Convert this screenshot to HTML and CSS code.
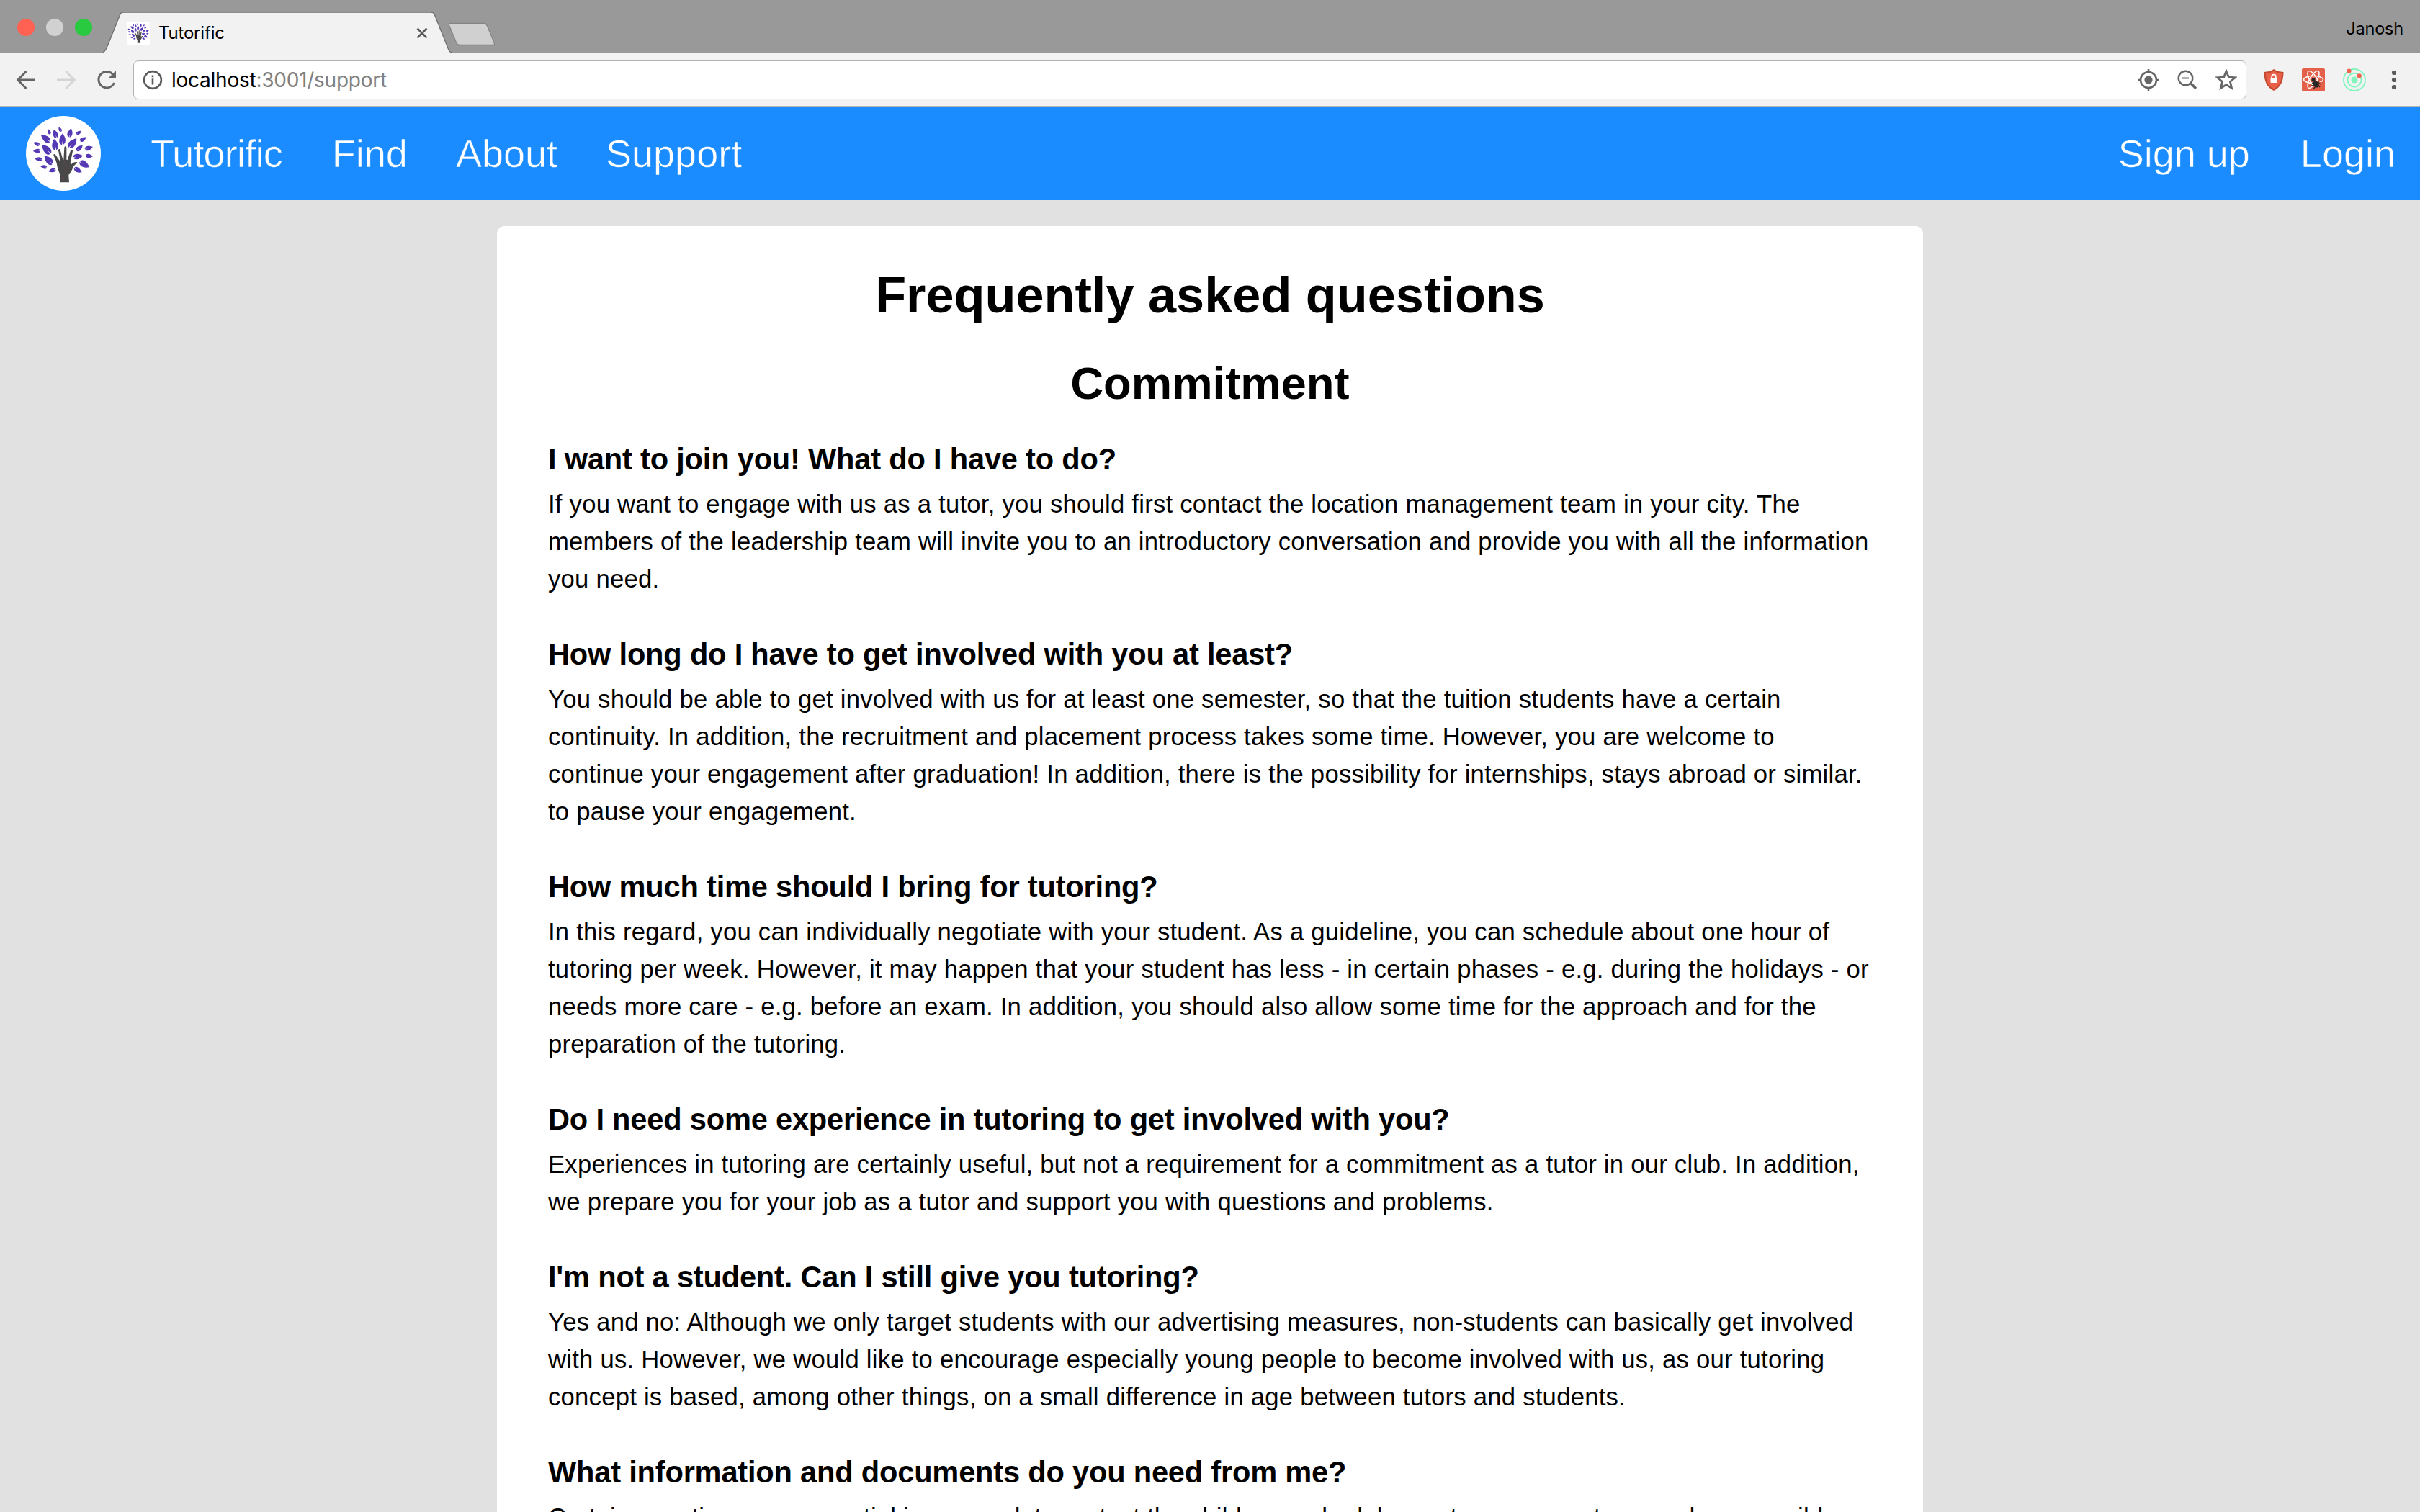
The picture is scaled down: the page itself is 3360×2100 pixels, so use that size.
FILE: index.html
```html
<!DOCTYPE html>
<html lang="en">
<head>
<meta charset="utf-8">
<title>Tutorific</title>
<link rel="stylesheet" href="styles.css">
</head>
<body>
<svg class="defs" width="0" height="0" aria-hidden="true">
  <defs>
    <path id="leaf" d="M0-50C22-28 35 8 22 33C17 43 9 47 3 50L1 14L-4 50C-17 46-29 38-28 12C-27-12-12-30 0-50Z"/>
    <g id="tree">
      <g fill="#5538b4">
        <use href="#leaf" transform="translate(145 110) rotate(-20) scale(.22)"/>
        <use href="#leaf" transform="translate(190 100) rotate(-30) scale(.22)"/>
        <use href="#leaf" transform="translate(170 118) rotate(-20) scale(.36)"/>
        <use href="#leaf" transform="translate(232 114) rotate(12) scale(.38)"/>
        <use href="#leaf" transform="translate(268 114) rotate(55) scale(.26)"/>
        <use href="#leaf" transform="translate(130 138) rotate(-55) scale(.46)"/>
        <use href="#leaf" transform="translate(200 141) scale(.47)"/>
        <use href="#leaf" transform="translate(286 141) rotate(55) scale(.3)"/>
        <use href="#leaf" transform="translate(92 160) rotate(-70) scale(.28)"/>
        <use href="#leaf" transform="translate(169 163) rotate(-10) scale(.47)"/>
        <use href="#leaf" transform="translate(243 157) rotate(38) scale(.5)"/>
        <use href="#leaf" transform="translate(133 183) rotate(-45) scale(.52)"/>
        <use href="#leaf" transform="translate(271 178) rotate(48) scale(.34)"/>
        <use href="#leaf" transform="translate(310 178) rotate(72) scale(.35)"/>
        <use href="#leaf" transform="translate(93 190) rotate(-95) scale(.31)"/>
        <use href="#leaf" transform="translate(312 211) rotate(95) scale(.3)"/>
        <use href="#leaf" transform="translate(265 213) rotate(80) scale(.4)"/>
        <use href="#leaf" transform="translate(100 224) rotate(-85) scale(.31)"/>
        <use href="#leaf" transform="translate(142 228) rotate(-45) scale(.48)"/>
        <use href="#leaf" transform="translate(292 246) rotate(118) scale(.47)"/>
        <use href="#leaf" transform="translate(122 256) rotate(-82) scale(.28)"/>
        <use href="#leaf" transform="translate(157 271) rotate(-108) scale(.31)"/>
        <use href="#leaf" transform="translate(265 270) rotate(118) scale(.36)"/>
      </g>
      <path fill="#484848" d="M191 321L192 290C186 280 179 262 177 246C175 232 166 216 163 207C163 202 169 202 172 207L188 230L191 228L183 188C182 181 189 180 191 186L202 226L205 226L208 176C209 169 216 169 217 176L217 226L221 227L234 189C236 183 243 184 243 190L233 240L236 247C242 239 250 235 259 236C263 237 262 240 259 242C247 248 242 266 237 275C233 282 226 285 226 292L228 321Z"/>
      <g fill="#b5402f">
        <circle cx="190" cy="240" r="1.6"/><circle cx="208" cy="238" r="1.6"/><circle cx="200" cy="252" r="1.6"/><circle cx="219" cy="254" r="1.6"/><circle cx="190" cy="268" r="1.6"/><circle cx="211" cy="270" r="1.6"/><circle cx="228" cy="262" r="1.6"/><circle cx="202" cy="284" r="1.6"/><circle cx="219" cy="286" r="1.6"/><circle cx="205" cy="303" r="1.6"/><circle cx="219" cy="308" r="1.6"/>
      </g>
    </g>
  </defs>
</svg>

<div class="titlebar">
  <div class="lights"><i class="light close"></i><i class="light minimise"></i><i class="light expand"></i></div>
  <div class="tab">
    <svg class="tab-shape" width="486" height="58" viewBox="0 0 486 58"><path d="M0 58L1 56.5C5 54 5 50 7 46L23 6C25 1.500 25 1 29 1H454C459 1 459 2 461 6L479 51C481 56 481 56 485 57L486 58Z" fill="#f2f2f2"/><path d="M0 57C4 55 5 50 7 46L23 6C25 1.500 25 1 29 1H454C459 1 459 2 461 6L479 51C481 56 481 56 485 57" fill="none" stroke="#6d6d6d" stroke-width="1.300"/></svg>
    <svg class="favicon" width="32" height="32" viewBox="66 69 272 272"><path fill="#fff" d="M66 69h272v272H66z"/><use href="#tree"/></svg>
    <span class="tab-title">Tutorific</span>
    <svg class="tab-close" width="16" height="16" viewBox="0 0 16 16"><path d="M1.500 1.500L14.500 14.500M14.500 1.500L1.500 14.500" stroke="#5a5a5a" stroke-width="2.600"/></svg>
  </div>
  <svg class="new-tab" width="66" height="34" viewBox="0 0 66 34"><path d="M3 1.500H50Q53 1.500 54.500 5L64 28Q65.500 31.500 62 31.500H16Q13 31.500 11.500 28L1.500 4Q.8 1.500 3 1.500Z" fill="#d0d0d0" stroke="#858585" stroke-width="1.300"/></svg>
  <span class="profile">Janosh</span>
</div>

<div class="toolbar">
  <div class="buttons">
    <svg width="28" height="28" viewBox="0 0 28 28" fill="none" stroke="#666" stroke-width="3"><path d="M27 14H4M14.500 2L2.800 14L14.500 26"/></svg>
    <svg width="28" height="28" viewBox="0 0 28 28" fill="none" stroke="#d4d4d4" stroke-width="3"><path d="M1 14H24M13.500 2L25.200 14L13.500 26"/></svg>
    <svg width="28" height="28" viewBox="0 0 28 28"><path d="M22.500 6.200A11.200 11.200 0 1 0 24.500 18" fill="none" stroke="#666" stroke-width="3"/><path d="M27 1V12H16Z" fill="#666"/></svg>
  </div>
  <div class="address">
    <svg width="28" height="28" viewBox="0 0 28 28"><circle cx="14" cy="14" r="11.900" fill="none" stroke="#5a5a5a" stroke-width="2.600"/><path d="M12.700 7.500h2.600v2.700h-2.600zM12.700 12.300h2.600v8.200h-2.600z" fill="#5a5a5a"/></svg>
    <span class="url"><b>localhost</b>:3001/support</span>
    <div class="page-actions">
      <svg width="30" height="30" viewBox="0 0 30 30" fill="none" stroke="#666" stroke-width="2.600"><circle cx="15" cy="15" r="11"/><circle cx="15" cy="15" r="5.600" fill="#666" stroke="none"/><path d="M15 0V5M15 25V30M0 15H5M25 15H30"/></svg>
      <svg width="28" height="28" viewBox="0 0 28 28" fill="none" stroke="#666"><circle cx="11.500" cy="11.500" r="9.800" stroke-width="2.400"/><path d="M7 11.500h9" stroke-width="2"/><path d="M18 18L26 26" stroke-width="3.600"/></svg>
      <svg width="30" height="30" viewBox="1.500 1.500 27 27"><path d="M15 4L18 11.500L26 12.100L19.900 17.300L21.800 25.200L15 20.900L8.200 25.200L10.100 17.300L4 12.100L12 11.500Z" fill="none" stroke="#666" stroke-width="2.500"/></svg>
    </div>
  </div>
  <div class="extensions">
    <svg width="28" height="32" viewBox="0 0 28 32"><path d="M14 1C18 4 22 4.500 27.500 5C27.500 17 24 26 14 31C4 26 .5 17 .5 5C6 4.500 10 4 14 1Z" fill="#c4492f"/><path d="M14 3.500C17.500 6 21 6.700 25 7C25 17 22 24.500 14 28.500C6 24.500 3 17 3 7C7 6.700 10.500 6 14 3.500Z" fill="#e8604a"/><path d="M11.200 14V11.500a2.800 2.800 0 0 1 5.600 0V14" fill="none" stroke="#fff" stroke-width="1.800"/><rect x="9.500" y="13" width="9" height="7" rx="1" fill="#fff"/></svg>
    <svg width="32" height="32" viewBox="0 0 32 32"><rect width="32" height="32" rx="2" fill="#e4604a"/><g fill="none" stroke="#fff" stroke-width="1.500"><ellipse cx="16" cy="15.500" rx="13.500" ry="5"/><ellipse cx="16" cy="15.500" rx="13.500" ry="5" transform="rotate(60 16 15.500)"/><ellipse cx="16" cy="15.500" rx="13.500" ry="5" transform="rotate(120 16 15.500)"/></g><path d="M14.500 28L15.500 22L20 17L29 20L27 28L19 30.500Z" fill="#e4604a"/><g fill="#262626" stroke="#262626"><circle cx="16" cy="16" r="2.600" stroke="none"/><ellipse cx="19.700" cy="22" rx="3.600" ry="4.800" transform="rotate(-35 19.700 22)" stroke="none"/><path d="M14 20L18 22M13.500 24L18 24M16 28.500L19 25M23 17V20L27 22.500M22 22L25 26" fill="none" stroke-width="1.300"/></g></svg>
    <svg width="32" height="32" viewBox="0 0 32 32"><g fill="none" stroke="#84f5bd" stroke-width="1.900"><circle cx="16" cy="16" r="15"/><circle cx="16" cy="16" r="9.500"/></g><circle cx="16" cy="16" r="4.500" fill="#84f5bd"/><circle cx="8.500" cy="3.500" r="3.100" fill="#f26350"/><circle cx="22.700" cy="10.300" r="3.100" fill="#f26350"/></svg>
  </div>
  <svg class="menu" width="8" height="28" viewBox="0 0 8 28" fill="#5a5a5a"><circle cx="4" cy="4" r="3.100"/><circle cx="4" cy="14" r="3.100"/><circle cx="4" cy="24" r="3.100"/></svg>
</div>

<header class="site-nav">
  <svg class="logo" width="104" height="104" viewBox="48 44 312 312"><circle cx="204" cy="200" r="156" fill="#fff"/><use href="#tree"/></svg>
  <nav class="links"><a class="brand">Tutorific</a><a>Find</a><a>About</a><a>Support</a></nav>
  <nav class="links account"><a>Sign up</a><a>Login</a></nav>
</header>

<main class="page">
  <article class="card">
    <h1>Frequently asked questions</h1>
    <h2>Commitment</h2>
    <section>
      <h3>I want to join you! What do I have to do?</h3>
      <p>If you want to engage with us as a tutor, you should first contact the location management team in your city. The<br>members of the leadership team will invite you to an introductory conversation and provide you with all the information<br>you need.</p>
    </section>
    <section>
      <h3>How long do I have to get involved with you at least?</h3>
      <p>You should be able to get involved with us for at least one semester, so that the tuition students have a certain<br>continuity. In addition, the recruitment and placement process takes some time. However, you are welcome to<br>continue your engagement after graduation! In addition, there is the possibility for internships, stays abroad or similar.<br>to pause your engagement.</p>
    </section>
    <section>
      <h3>How much time should I bring for tutoring?</h3>
      <p>In this regard, you can individually negotiate with your student. As a guideline, you can schedule about one hour of<br>tutoring per week. However, it may happen that your student has less - in certain phases - e.g. during the holidays - or<br>needs more care - e.g. before an exam. In addition, you should also allow some time for the approach and for the<br>preparation of the tutoring.</p>
    </section>
    <section>
      <h3>Do I need some experience in tutoring to get involved with you?</h3>
      <p>Experiences in tutoring are certainly useful, but not a requirement for a commitment as a tutor in our club. In addition,<br>we prepare you for your job as a tutor and support you with questions and problems.</p>
    </section>
    <section>
      <h3>I'm not a student. Can I still give you tutoring?</h3>
      <p>Yes and no: Although we only target students with our advertising measures, non-students can basically get involved<br>with us. However, we would like to encourage especially young people to become involved with us, as our tutoring<br>concept is based, among other things, on a small difference in age between tutors and students.</p>
    </section>
    <section>
      <h3>What information and documents do you need from me?</h3>
      <p>Certain questions are essential in our work to protect the children and adolescents we support as much as possible</p>
    </section>
  </article>
</main>
</body>
</html>
```
FILE: styles.css
```css
* { box-sizing: border-box; }

body {
  margin: 0;
  height: 2100px;
  overflow: hidden;
  display: flex;
  flex-direction: column;
  background: #e1e1e1;
  color: #000;
  font-family: "Liberation Sans", Helvetica, Arial, sans-serif;
}

svg { display: block; flex: none; }
.defs { position: absolute; }

/* Browser window: tab strip */
.titlebar {
  flex: none;
  height: 74px;
  display: flex;
  align-items: flex-end;
  background: #999;
  border-bottom: 1px solid #6d6d6d;
  font-family: Inter, sans-serif;
}
.lights {
  display: flex;
  gap: 16px;
  width: 143px;
  padding: 0 0 23px 24px;
}
.light { width: 24px; height: 24px; border-radius: 50%; }
.close { background: #ff6152; }
.minimise { background: #d1d1d1; }
.expand { background: #29c940; }
.tab {
  position: relative;
  display: flex;
  align-items: center;
  width: 486px;
  height: 57px;
  padding: 0 35px 0 33px;
}
.tab-shape { position: absolute; left: 0; top: 0; }
.favicon { position: relative; top: 1px; }
.tab-title {
  position: relative;
  top: 1px;
  margin-left: 12px;
  font-size: 24px;
  letter-spacing: -0.2px;
}
.tab-close { position: relative; top: 1px; margin-left: auto; }
.new-tab { margin: 0 0 8px -7px; }
.profile {
  margin-left: auto;
  padding: 0 23px 18px 0;
  font-size: 23.5px;
  line-height: 30px;
  letter-spacing: -0.2px;
}

/* Browser window: toolbar */
.toolbar {
  flex: none;
  height: 74px;
  display: flex;
  align-items: center;
  padding: 0 32px 0 22px;
  background: #f2f2f2;
  border-bottom: 1px solid #b4b4b4;
}
.buttons { display: flex; gap: 28px; width: 163px; }
.address {
  flex: 1;
  height: 54px;
  display: flex;
  align-items: center;
  padding: 0 12px 0 12px;
  background: #fff;
  border: 1px solid #b2b2b2;
  border-radius: 7px;
}
.url {
  margin-left: 12px;
  font: 28px Inter, sans-serif;
  letter-spacing: -0.25px;
  color: #808080;
}
.url b { font-weight: 400; color: #000; }
.page-actions { display: flex; align-items: center; gap: 25px; margin-left: auto; }
.extensions { display: flex; align-items: center; gap: 25px; margin: 0 35px 0 24px; }

/* Site navigation */
.site-nav {
  flex: none;
  height: 130px;
  display: flex;
  align-items: center;
  padding: 0 34px 0 36px;
  background: #1a8cff;
}
.links {
  display: flex;
  gap: 67px;
  margin-left: 69px;
  font-size: 54px;
  line-height: 64px;
  color: #fff;
  -webkit-text-stroke: 0.6px #1a8cff;
}
.brand { margin-right: 2px; letter-spacing: -0.8px; }
.account { margin-left: auto; gap: 70px; }

/* FAQ */
.page { flex: 1; min-height: 0; padding-top: 36px; }
.card {
  width: 1980px;
  margin: 0 auto;
  padding: 56px 70px;
  background: #fff;
  border-radius: 10px;
}
h1, h2, h3, p { margin: 0; white-space: nowrap; }
h1 { font-size: 70.3px; line-height: 80px; text-align: center; }
h2 { margin: 46px 0 39px; font-size: 63.4px; line-height: 72px; text-align: center; }
section { padding-left: 1px; }
h3 { margin-bottom: 5px; font-size: 41.6px; line-height: 62px; letter-spacing: -0.2px; }
p { font-size: 34.67px; line-height: 52px; letter-spacing: 0.24px; }
section + section { margin-top: 48px; }
```
